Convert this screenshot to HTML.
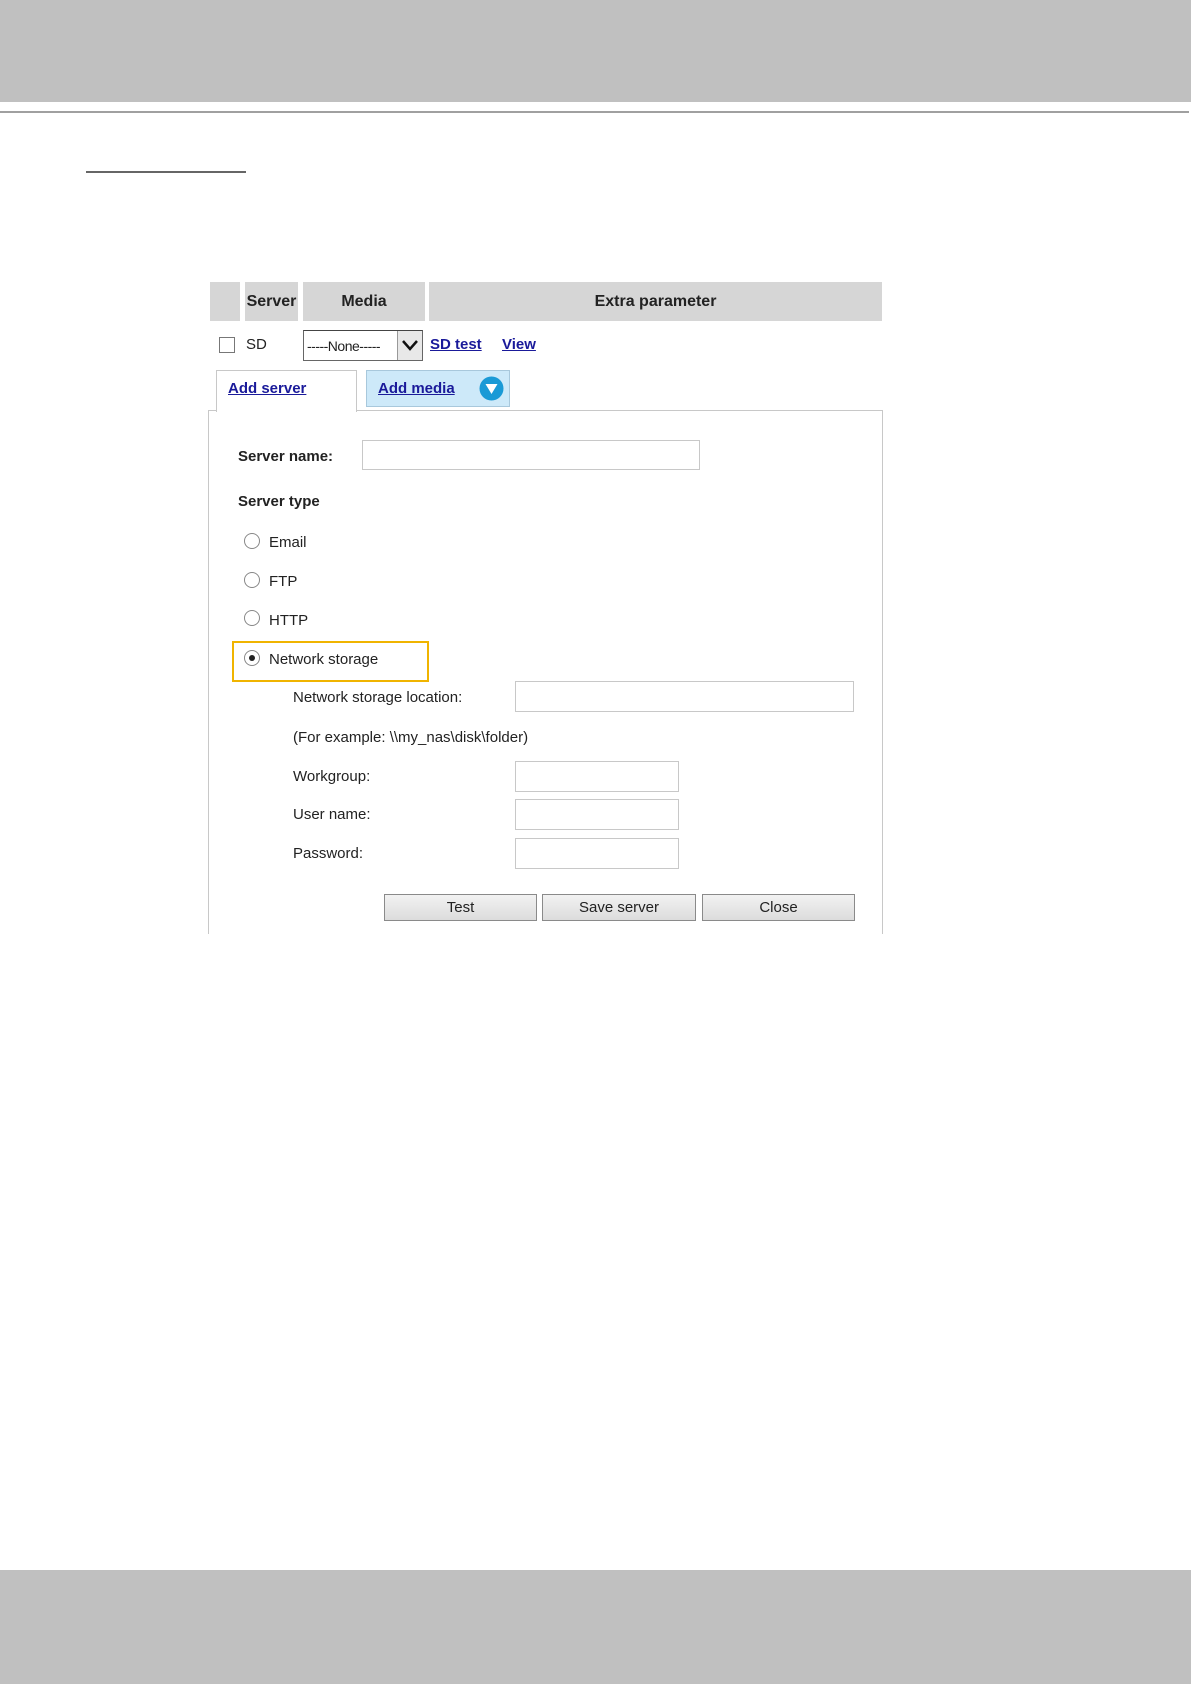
<!DOCTYPE html>
<html><head><meta charset="utf-8"><style>
*{margin:0;padding:0;box-sizing:border-box}
body{width:1191px;height:1684px;position:relative;background:#fff;font-family:"Liberation Sans",Arial,sans-serif;color:#222;overflow:hidden}
.a{position:absolute}
.hd{background:#d6d6d6;top:282px;height:39px;font-weight:bold;font-size:16px;line-height:39px;text-align:center;color:#222}
.t{font-size:15px;line-height:18px;white-space:nowrap}
.b{font-weight:bold;font-size:15px}
.lnk{color:#1a1a9a;text-decoration:underline;font-weight:bold;font-size:15px}
.in{border:1px solid #c8c8c8;background:#fff}
.r{width:16px;height:16px;border:1px solid #888;border-radius:50%;background:#fff}
.btn{top:894px;height:27px;border:1px solid #8a8a8a;background:linear-gradient(#f2f2f2,#dcdcdc);font-size:15px;line-height:25px;text-align:center;color:#222}
</style></head><body>
<div class="a" style="left:0;top:0;width:1191px;height:102px;background:#c0c0c0"></div>
<div class="a" style="left:0;top:111px;width:1189px;height:2px;background:#a0a0a0"></div>
<div class="a" style="left:86px;top:171px;width:160px;height:2px;background:#666"></div>

<div class="a hd" style="left:210px;width:30px"></div>
<div class="a hd" style="left:245px;width:53px">Server</div>
<div class="a hd" style="left:303px;width:122px">Media</div>
<div class="a hd" style="left:429px;width:453px">Extra parameter</div>

<div class="a" style="left:219px;top:337px;width:16px;height:16px;border:1px solid #777;background:#fff"></div>
<div class="a t" style="left:246px;top:336px">SD</div>
<div class="a" style="left:303px;top:330px;width:120px;height:31px;border:1px solid #666;border-top-color:#444;background:#fff"></div>
<div class="a t" style="left:307px;top:337px;font-size:14px;letter-spacing:-0.5px">-----None-----</div>
<div class="a" style="left:397px;top:331px;width:25px;height:29px;background:#e8e8e8;border-left:1px solid #999"></div>
<svg class="a" style="left:400px;top:337px" width="20" height="16"><path d="M3 4 L10 12 L17 4" stroke="#111" stroke-width="2.5" fill="none"/></svg>
<div class="a lnk" style="left:430px;top:336px">SD test</div>
<div class="a lnk" style="left:502px;top:336px">View</div>

<div class="a" style="left:208px;top:410px;width:675px;height:524px;border:1px solid #c8c8c8;border-bottom:none"></div>
<div class="a" style="left:216px;top:370px;width:141px;height:42px;border:1px solid #c8c8c8;border-bottom:none;background:#fff"></div>
<div class="a lnk" style="left:228px;top:380px">Add server</div>
<div class="a" style="left:366px;top:370px;width:144px;height:37px;border:1px solid #a8c8dc;background:#cde9f9"></div>
<div class="a lnk" style="left:378px;top:380px">Add media</div>
<svg class="a" style="left:479px;top:376px" width="25" height="25"><circle cx="12.5" cy="12.5" r="12" fill="#1a9ad6"/><path d="M6.5 8 L18.5 8 L12.5 18 Z" fill="#fff"/></svg>

<div class="a b" style="left:238px;top:448px">Server name:</div>
<div class="a in" style="left:362px;top:440px;width:338px;height:30px"></div>
<div class="a b" style="left:238px;top:493px">Server type</div>

<div class="a r" style="left:244px;top:533px"></div><div class="a t" style="left:269px;top:534px">Email</div>
<div class="a r" style="left:244px;top:572px"></div><div class="a t" style="left:269px;top:573px">FTP</div>
<div class="a r" style="left:244px;top:610px"></div><div class="a t" style="left:269px;top:612px">HTTP</div>
<div class="a" style="left:232px;top:641px;width:197px;height:41px;border:2px solid #f0b400"></div>
<div class="a r" style="left:244px;top:650px"></div><div class="a" style="left:249px;top:655px;width:6px;height:6px;border-radius:50%;background:#222"></div>
<div class="a t" style="left:269px;top:651px">Network storage</div>

<div class="a t" style="left:293px;top:689px">Network storage location:</div>
<div class="a in" style="left:515px;top:681px;width:339px;height:31px"></div>
<div class="a t" style="left:293px;top:729px">(For example: \\my_nas\disk\folder)</div>
<div class="a t" style="left:293px;top:768px">Workgroup:</div>
<div class="a in" style="left:515px;top:761px;width:164px;height:31px"></div>
<div class="a t" style="left:293px;top:806px">User name:</div>
<div class="a in" style="left:515px;top:799px;width:164px;height:31px"></div>
<div class="a t" style="left:293px;top:845px">Password:</div>
<div class="a in" style="left:515px;top:838px;width:164px;height:31px"></div>

<div class="a btn" style="left:384px;width:153px">Test</div>
<div class="a btn" style="left:542px;width:154px">Save server</div>
<div class="a btn" style="left:702px;width:153px">Close</div>

<div class="a" style="left:0;top:1570px;width:1191px;height:114px;background:#c0c0c0"></div>
</body></html>
